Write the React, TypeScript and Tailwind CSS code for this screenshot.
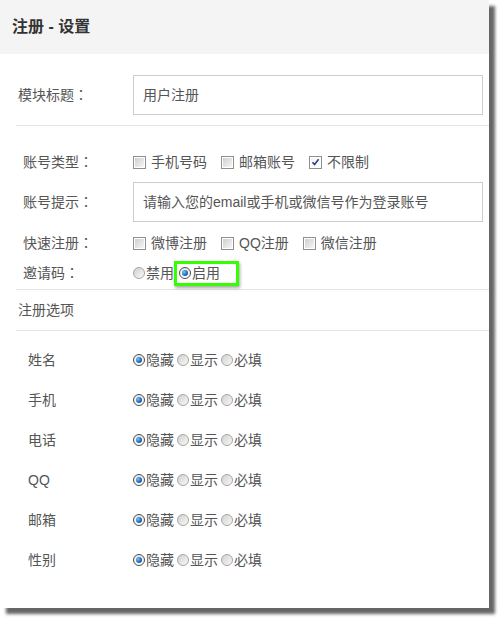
const font = "font-['Liberation_Sans','Noto_Sans_CJK_SC',sans-serif]";
const colon = "font-['Noto_Sans_CJK_JP',sans-serif]";

const Label = ({ text, pad }: { text: string; pad: string }) => (
  <div className={`w-[133px] ${pad}`}>
    {text}
    <span className={colon}>：</span>
  </div>
);

const Checkbox = ({ checked }: { checked?: boolean }) => (
  <span className="relative inline-flex h-[13px] w-[13px] shrink-0 border border-[#8f8f8f] bg-white p-px">
    <span
      className={
        checked
          ? "block h-full w-full bg-gradient-to-br from-[#f4f4f4] to-white"
          : "block h-full w-full bg-gradient-to-br from-[#cfcfcf] to-[#f6f6f6]"
      }
    />
    {checked && (
      <svg className="absolute left-[1px] top-[1px] h-[9px] w-[9px]" viewBox="0 0 9 9">
        <path d="M1.5 4.2 L3.6 6.6 L7.6 1.2" fill="none" stroke="#2b3f8a" strokeWidth={1.6} />
      </svg>
    )}
  </span>
);

const Radio = ({ checked }: { checked?: boolean }) => (
  <span
    className={
      checked
        ? "inline-flex h-[12px] w-[12px] shrink-0 items-center justify-center rounded-full border border-[#4a4a4a] bg-gradient-to-b from-[#e8e8e8] to-white"
        : "inline-flex h-[12px] w-[12px] shrink-0 rounded-full border border-[#a5a5a5] bg-gradient-to-br from-[#d0d0d0] to-[#fafafa]"
    }
  >
    {checked && (
      <span className="block h-[6px] w-[6px] rounded-full bg-[radial-gradient(circle_at_35%_35%,#7cc4ff,#1466b8_60%,#0b3f7a)]" />
    )}
  </span>
);

const CheckItem = ({ text, checked }: { text: string; checked?: boolean }) => (
  <span className="mr-[14px] inline-flex items-center">
    <Checkbox checked={checked} />
    <span className="ml-[5px]">{text}</span>
  </span>
);

const RadioItem = ({ text, checked }: { text: string; checked?: boolean }) => (
  <span className="mr-[3px] inline-flex items-center">
    <Radio checked={checked} />
    <span className="ml-px">{text}</span>
  </span>
);

const fields = ["姓名", "手机", "电话", "QQ", "邮箱", "性别"];

export default function App() {
  return (
    <div className={`h-[624px] w-[504px] bg-white ${font}`}>
      <div className="w-[489px] bg-white pb-[28px] text-[14px] text-[#555] shadow-[6px_6px_3px_rgba(0,0,0,0.6)]">
        {/* Header */}
        <div className="flex h-[54px] items-center bg-[#f4f4f4] pl-[12px] text-[16px] font-bold text-[#333]">
          注册 - 设置
        </div>

        {/* 模块标题 */}
        <div className="mt-[21px] flex items-center">
          <Label text="模块标题" pad="pl-[18px]" />
          <div className="flex h-[40px] w-[350px] items-center border border-[#ccc] px-[9px]">用户注册</div>
        </div>
        <div className="ml-[16px] mt-[10px] border-t border-[#e5e5e5]" />

        {/* 账号 */}
        <div className="mt-[24px] flex h-[24px] items-center">
          <Label text="账号类型" pad="pl-[23px]" />
          <CheckItem text="手机号码" />
          <CheckItem text="邮箱账号" />
          <CheckItem text="不限制" checked />
        </div>
        <div className="mt-[8px] flex items-center">
          <Label text="账号提示" pad="pl-[23px]" />
          <div className="flex h-[40px] w-[350px] items-center border border-[#ccc] px-[9px]">
            请输入您的email或手机或微信号作为登录账号
          </div>
        </div>
        <div className="mt-[9px] flex h-[24px] items-center">
          <Label text="快速注册" pad="pl-[23px]" />
          <CheckItem text="微博注册" />
          <CheckItem text="QQ注册" />
          <CheckItem text="微信注册" />
        </div>
        <div className="mt-[6px] flex h-[24px] items-center">
          <Label text="邀请码" pad="pl-[23px]" />
          <RadioItem text="禁用" />
          <span className="-ml-[3px] inline-flex h-[25px] w-[65px] items-center border-[3px] border-[#33ff00] pl-[2px] shadow-[1px_2px_3px_rgba(0,0,0,0.35)]">
            <Radio checked />
            <span className="ml-px">启用</span>
          </span>
        </div>
        <div className="ml-[16px] mt-[4px] border-t border-[#e5e5e5]" />

        {/* 注册选项 */}
        <div className="flex h-[40px] items-center pl-[18px]">注册选项</div>
        <div className="ml-[16px] border-t border-[#e5e5e5]" />

        <div className="mt-[9px]">
          {fields.map((f) => (
            <div key={f} className="flex h-[40px] items-center">
              <div className="w-[133px] pl-[28px]">{f}</div>
              <RadioItem text="隐藏" checked />
              <RadioItem text="显示" />
              <RadioItem text="必填" />
            </div>
          ))}
        </div>
      </div>
    </div>
  );
}
